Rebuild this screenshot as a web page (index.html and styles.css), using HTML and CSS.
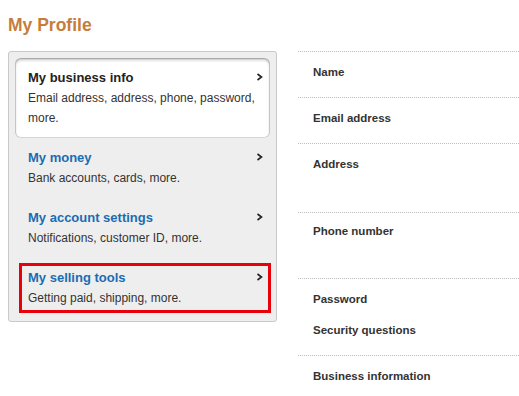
FILE: index.html
```html
<!DOCTYPE html>
<html>
<head>
  <title>My Profile</title>
  <link rel="stylesheet" href="styles.css">
</head>
<body>

  <div class="page">

    <h1 class="title">My Profile</h1>

    <div class="content">

      <div class="menu">

        <div class="menu-card">
          <div class="menu-item">
            <div class="menu-head">
              <span class="menu-name">My business info</span>
              <svg class="chev" width="7" height="8" viewBox="0 0 7 8"><polyline points="1.5,1 5.5,4 1.5,7" /></svg>
            </div>
            <p class="menu-desc">Email address, address, phone, password, more.</p>
          </div>
        </div>

        <div class="menu-item">
          <div class="menu-head">
            <span class="menu-name link">My money</span>
            <svg class="chev" width="7" height="8" viewBox="0 0 7 8"><polyline points="1.5,1 5.5,4 1.5,7" /></svg>
          </div>
          <p class="menu-desc">Bank accounts, cards, more.</p>
        </div>

        <div class="menu-item">
          <div class="menu-head">
            <span class="menu-name link">My account settings</span>
            <svg class="chev" width="7" height="8" viewBox="0 0 7 8"><polyline points="1.5,1 5.5,4 1.5,7" /></svg>
          </div>
          <p class="menu-desc">Notifications, customer ID, more.</p>
        </div>

        <div class="menu-item marked">
          <div class="menu-head">
            <span class="menu-name link">My selling tools</span>
            <svg class="chev" width="7" height="8" viewBox="0 0 7 8"><polyline points="1.5,1 5.5,4 1.5,7" /></svg>
          </div>
          <p class="menu-desc">Getting paid, shipping, more.</p>
        </div>

      </div>

      <div class="fields">
        <div class="field field-short"><div class="label">Name</div></div>
        <div class="field field-short"><div class="label">Email address</div></div>
        <div class="field field-address"><div class="label">Address</div></div>
        <div class="field field-phone"><div class="label">Phone number</div></div>
        <div class="field field-security">
          <div class="label">Password</div>
          <div class="label second">Security questions</div>
        </div>
        <div class="field"><div class="label">Business information</div></div>
      </div>

    </div>

  </div>

</body>
</html>
```

FILE: styles.css
```css
body{
    margin: 0;
    background: #ffffff;
    font-family: "Liberation Sans", Arial, sans-serif;
    color: #333333;
}

.page{
    padding-left: 8px;
}

.title{
    margin: 0;
    padding-top: 15px;
    font-size: 17.5px;
    line-height: 20px;
    font-weight: bold;
    color: #c67d3b;
}

.content{
    display: flex;
    align-items: flex-start;
    margin-top: 16px;
}

/* left menu */

.menu{
    width: 255px;
    padding: 6px 6px 3px 6px;
    background: #eeeeee;
    border: 1px solid #c9c9c9;
    border-radius: 3px;
}

.menu-card{
    background: #ffffff;
    border-radius: 6px;
    box-shadow: inset 0 2px 3px rgba(0, 0, 0, 0.25), inset 0 0 0 1px #d8d8d8;
}

.menu-item{
    position: relative;
    padding: 9px 7px 10px 13px;
}

.menu-head{
    display: flex;
    justify-content: space-between;
    align-items: center;
    height: 20px;
    margin-bottom: 1px;
}

.menu-name{
    font-size: 13px;
    font-weight: bold;
    color: #222222;
}

.menu-name.link{
    color: #1a6cb3;
}

.chev{
    fill: none;
    stroke: #222222;
    stroke-width: 1.6;
}

.menu-desc{
    margin: 0;
    font-size: 12px;
    line-height: 20px;
    color: #333333;
}

.marked::after{
    content: "";
    position: absolute;
    top: 5px;
    left: 4px;
    right: -1px;
    bottom: 5px;
    border: 3px solid #e8000b;
}

/* right fields */

.fields{
    flex: 1;
    margin-left: 21px;
}

.field{
    border-top: 1px dotted #bdbdbd;
    padding: 13px 0 0 15px;
    box-sizing: border-box;
}

.field-short{
    height: 46px;
}

.field-address{
    height: 69px;
}

.field-phone{
    height: 66px;
    padding-top: 11px;
}

.field-security{
    height: 77px;
}

.label{
    font-size: 11.5px;
    line-height: 14px;
    font-weight: bold;
    color: #333333;
}

.label.second{
    margin-top: 17px;
}
```
